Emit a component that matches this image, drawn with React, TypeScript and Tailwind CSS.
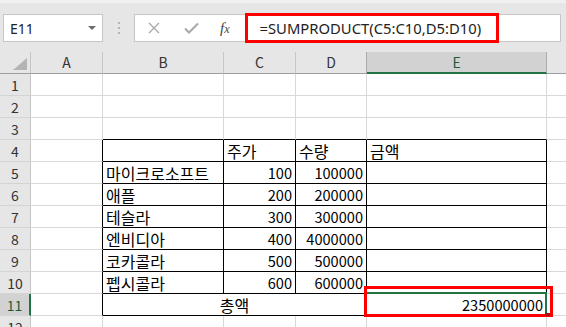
import React from "react";

type CellProps = {
  w?: string;
  className?: string;
  children?: React.ReactNode;
};

function Cell({ w = "", className = "", children }: CellProps) {
  return (
    <div
      className={`flex h-full shrink-0 items-center whitespace-nowrap border-b border-r px-[3px] pt-[1px] ${w} ${className}`}
    >
      {children}
    </div>
  );
}

const rows = [
  { name: "마이크로소프트", price: "100", qty: "100000" },
  { name: "애플", price: "200", qty: "200000" },
  { name: "테슬라", price: "300", qty: "300000" },
  { name: "엔비디아", price: "400", qty: "4000000" },
  { name: "코카콜라", price: "500", qty: "500000" },
  { name: "펩시콜라", price: "600", qty: "600000" },
];

const grid = "border-[#d9d9d9]";
const dark = "border-black";
const ko = "text-[16px]";

function RowHead({ n, active = false }: { n: number; active?: boolean }) {
  return (
    <div
      className={`flex h-full w-[31px] shrink-0 items-center justify-center border-b border-b-[#d4d4d4] pt-[1px] text-[14px] ${
        active
          ? "border-r-2 border-r-[#217346] bg-[#d2d2d2] text-[#1e5b3a]"
          : "border-r border-r-[#c6c6c6] bg-[#e6e6e6] text-[#333]"
      }`}
    >
      {n}
    </div>
  );
}

export default function App() {
  return (
    <div
      className="relative h-[327px] w-[566px] overflow-hidden bg-[#e6e6e6] text-black"
      style={{ fontFamily: '"Noto Sans", "Noto Sans CJK KR", sans-serif' }}
    >
      {/* formula bar */}
      <div className="h-[52px] border-t-[3px] border-t-[#f0f0f0] pt-[11px]">
        <div className="flex h-[28px] items-center">
          <div className="ml-[3px] flex h-full w-[100px] items-center justify-between border border-[#c6c6c6] bg-white pl-[6px] pr-[6px] text-[14px] text-[#222]">
            <span>E11</span>
            <span className="h-0 w-0 border-x-[4px] border-t-[4px] border-x-transparent border-t-[#6d6d6d]" />
          </div>
          <div className="flex w-[31px] flex-col items-center gap-[3px]">
            <span className="h-[2px] w-[2px] bg-[#b5b5b5]" />
            <span className="h-[2px] w-[2px] bg-[#b5b5b5]" />
            <span className="h-[2px] w-[2px] bg-[#b5b5b5]" />
          </div>
          <div className="flex h-full w-[427px] items-center border border-[#c6c6c6] bg-white">
            <svg className="ml-[13px]" width="12" height="12" viewBox="0 0 12 12">
              <path d="M1 1L11 11M11 1L1 11" stroke="#a8a8a8" strokeWidth="1.3" fill="none" />
            </svg>
            <svg className="ml-[24px]" width="15" height="12" viewBox="0 0 15 12">
              <path d="M1 6.5L5 10.5L14 1.5" stroke="#a8a8a8" strokeWidth="2" fill="none" />
            </svg>
            <span
              className="ml-[21px] text-[15px] italic text-[#444]"
              style={{ fontFamily: '"Liberation Serif", serif' }}
            >
              f<span className="text-[12px]">x</span>
            </span>
            <span className="ml-[30px] text-[14.8px] text-[#222]">=SUMPRODUCT(C5:C10,D5:D10)</span>
          </div>
        </div>
      </div>

      {/* sheet */}
      <div style={{ fontFamily: '"Noto Sans CJK KR", "Noto Sans", sans-serif' }}>
        {/* column headers */}
        <div className="flex h-[22px] text-[14px] text-[#333]">
          <div className="relative h-full w-[31px] shrink-0 border-b border-r border-b-[#9e9e9e] border-r-[#c6c6c6]">
            <span className="absolute left-[13px] top-[6px] h-0 w-0 border-b-[12px] border-l-[14px] border-b-[#b4b4b4] border-l-transparent" />
          </div>
          <div className="flex h-full w-[72px] shrink-0 items-center justify-center border-b border-r border-b-[#9e9e9e] border-r-[#c6c6c6]">A</div>
          <div className="flex h-full w-[121px] shrink-0 items-center justify-center border-b border-r border-b-[#9e9e9e] border-r-[#c6c6c6]">B</div>
          <div className="flex h-full w-[72px] shrink-0 items-center justify-center border-b border-r border-b-[#9e9e9e] border-r-[#c6c6c6]">C</div>
          <div className="flex h-full w-[71px] shrink-0 items-center justify-center border-b border-r border-b-[#9e9e9e] border-r-[#ababab]">D</div>
          <div className="flex h-full w-[180px] shrink-0 items-center justify-center border-b-2 border-r border-b-[#217346] border-r-[#ababab] bg-[#d2d2d2] text-[#1e5b3a]">E</div>
          <div className="h-full flex-1 border-b border-b-[#9e9e9e]" />
        </div>

        {/* rows 1-3 */}
        {[1, 2, 3].map((n) => (
          <div key={n} className="flex h-[22px] bg-white">
            <RowHead n={n} />
            <Cell w="w-[72px]" className={grid} />
            <Cell w="w-[121px]" className={n === 3 ? "border-r-[#d9d9d9] border-b-black" : grid} />
            <Cell w="w-[72px]" className={n === 3 ? "border-r-[#d9d9d9] border-b-black" : grid} />
            <Cell w="w-[71px]" className={n === 3 ? "border-r-[#d9d9d9] border-b-black" : grid} />
            <Cell w="w-[180px]" className={n === 3 ? "border-r-[#d9d9d9] border-b-black" : grid} />
            <div className="h-full flex-1 border-b border-[#d9d9d9]" />
          </div>
        ))}

        {/* row 4 */}
        <div className="flex h-[22px] bg-white text-[14.6px]">
          <RowHead n={4} />
          <Cell w="w-[72px]" className="border-b-[#d9d9d9] border-r-black" />
          <Cell w="w-[121px]" className={dark} />
          <Cell w="w-[72px]" className={`${dark} ${ko}`}>주가</Cell>
          <Cell w="w-[71px]" className={`${dark} ${ko}`}>수량</Cell>
          <Cell w="w-[180px]" className={`${dark} ${ko}`}>금액</Cell>
          <div className="h-full flex-1 border-b border-[#d9d9d9]" />
        </div>

        {/* rows 5-10 */}
        {rows.map((r, i) => (
          <div key={r.name} className="flex h-[22px] bg-white text-[14.6px]">
            <RowHead n={i + 5} />
            <Cell w="w-[72px]" className="border-b-[#d9d9d9] border-r-black" />
            <Cell w="w-[121px]" className={`${dark} ${ko}`}>{r.name}</Cell>
            <Cell w="w-[72px]" className={`${dark} justify-end`}>{r.price}</Cell>
            <Cell w="w-[71px]" className={`${dark} justify-end`}>{r.qty}</Cell>
            <Cell w="w-[180px]" className={dark} />
            <div className="h-full flex-1 border-b border-[#d9d9d9]" />
          </div>
        ))}

        {/* row 11 */}
        <div className="flex h-[22px] bg-white text-[14.6px]">
          <RowHead n={11} active />
          <Cell w="w-[72px]" className="border-b-[#d9d9d9] border-r-black" />
          <Cell w="w-[264px]" className={`${dark} ${ko} justify-center`}>총액</Cell>
          <div className="relative flex h-full w-[180px] shrink-0 items-center justify-end border-b border-r border-black pr-[3px] pt-[1px]">
            <div className="absolute -left-[2px] -top-[2px] h-[25px] w-[182px] border-2 border-[#217346]" />
            2350000000
          </div>
          <div className="h-full flex-1 border-b border-[#d9d9d9]" />
        </div>

        {/* row 12 */}
        <div className="flex h-[22px] bg-white">
          <RowHead n={12} />
          <Cell w="w-[72px]" className={grid} />
          <Cell w="w-[121px]" className={grid} />
          <Cell w="w-[72px]" className={grid} />
          <Cell w="w-[71px]" className={grid} />
          <Cell w="w-[180px]" className={grid} />
          <div className="h-full flex-1 border-b border-[#d9d9d9]" />
        </div>
      </div>

      {/* annotation boxes */}
      <div className="absolute left-[245px] top-[13px] h-[30px] w-[254px] border-[3px] border-[#ff0000]" />
      <div className="absolute left-[364px] top-[286px] h-[31px] w-[189px] border-[3px] border-[#ff0000]" />
      <div className="absolute left-[545px] top-[313px] h-[3px] w-[5px] bg-[#a31515]" />
    </div>
  );
}
